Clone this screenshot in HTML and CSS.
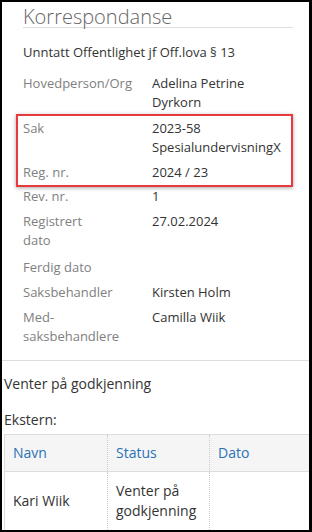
FILE: index.html
```html
<!DOCTYPE html>
<html lang="no">
<head>
    <meta charset="UTF-8">
    <meta name="viewport" content="width=device-width, initial-scale=1.0">
    <title>Korrespondanse</title>
    <link rel="stylesheet" href="styles.css">
</head>
<body>
    <div class="frame">
        <section class="card">
            <h1 class="card-title">Korrespondanse</h1>
            <p class="card-note">Unntatt Offentlighet jf Off.lova § 13</p>
            <div class="details">
                <div class="detail-row">
                    <span class="detail-label">Hovedperson/Org</span>
                    <span class="detail-value">Adelina Petrine Dyrkorn</span>
                </div>
                <div class="highlight">
                    <div class="detail-row">
                        <span class="detail-label">Sak</span>
                        <span class="detail-value">2023-58 SpesialundervisningX</span>
                    </div>
                    <div class="detail-row">
                        <span class="detail-label">Reg. nr.</span>
                        <span class="detail-value">2024 / 23</span>
                    </div>
                </div>
                <div class="detail-row">
                    <span class="detail-label">Rev. nr.</span>
                    <span class="detail-value">1</span>
                </div>
                <div class="detail-row detail-row-tall">
                    <span class="detail-label">Registrert<br>dato</span>
                    <span class="detail-value">27.02.2024</span>
                </div>
                <div class="detail-row">
                    <span class="detail-label">Ferdig dato</span>
                    <span class="detail-value"></span>
                </div>
                <div class="detail-row">
                    <span class="detail-label">Saksbehandler</span>
                    <span class="detail-value">Kirsten Holm</span>
                </div>
                <div class="detail-row">
                    <span class="detail-label">Med-saksbehandlere</span>
                    <span class="detail-value">Camilla Wiik</span>
                </div>
            </div>
        </section>

        <section class="approval">
            <p class="approval-status">Venter på godkjenning</p>
            <p class="approval-heading">Ekstern:</p>
            <table class="approval-table">
                <colgroup>
                    <col class="col-name">
                    <col class="col-status">
                    <col>
                </colgroup>
                <thead>
                    <tr>
                        <th>Navn</th>
                        <th>Status</th>
                        <th>Dato</th>
                    </tr>
                </thead>
                <tbody>
                    <tr>
                        <td>Kari Wiik</td>
                        <td>Venter på godkjenning</td>
                        <td></td>
                    </tr>
                </tbody>
            </table>
        </section>
    </div>
</body>
</html>
```

FILE: styles.css
```css
html, body {
    margin: 0;
    padding: 0;
    background-color: #fff;
}
body {
    font-family: "Open Sans", "DejaVu Sans", sans-serif;
    color: #333;
}
.frame {
    width: 312px;
    height: 532px;
    box-sizing: border-box;
    border: 2px solid #000;
    border-right-width: 3px;
    overflow: hidden;
}
.card {
    padding: 4px 16px 11px 21px;
    border-bottom: 1px solid #ddd;
}
.card-title {
    margin: 0;
    font-size: 20px;
    line-height: 21px;
    font-weight: 300;
    color: #666;
    border-bottom: 1px solid #ddd;
}
.card-note {
    margin: 15px 0 9px;
    font-size: 13px;
    line-height: 19px;
}
.details {
    font-size: 13px;
    line-height: 19px;
}
.detail-row {
    display: grid;
    grid-template-columns: 129px 1fr;
    padding: 3px 0;
}
.detail-row-tall {
    padding-bottom: 5px;
}
.detail-label {
    color: #808080;
    padding-right: 10px;
}
.detail-value {
    color: #333;
}
.highlight {
    margin: -1px 0 -3px -7px;
    padding-left: 5px;
    border: 2px solid #e8393c;
    box-shadow: 0 1px 4px rgba(0,0,0,0.35);
}
.approval {
    padding: 13px 0 0 2px;
    font-size: 14px;
    line-height: 20px;
}
.approval-status {
    margin: 0 0 16px;
}
.approval-heading {
    margin: 0 0 4px;
}
.approval-table {
    width: 420px;
    border-collapse: collapse;
    border: 1px solid #ddd;
}
.col-name {
    width: 103px;
}
.col-status {
    width: 102px;
}
.approval-table th {
    background-color: #f5f5f5;
    color: #2a72b5;
    font-weight: normal;
    text-align: left;
    padding: 8px 8px;
    border-bottom: 1px solid #ddd;
}
.approval-table td {
    padding: 9px 8px;
    vertical-align: middle;
}
.approval-table th + th,
.approval-table td + td {
    border-left: 1px dotted #ccc;
}
```
